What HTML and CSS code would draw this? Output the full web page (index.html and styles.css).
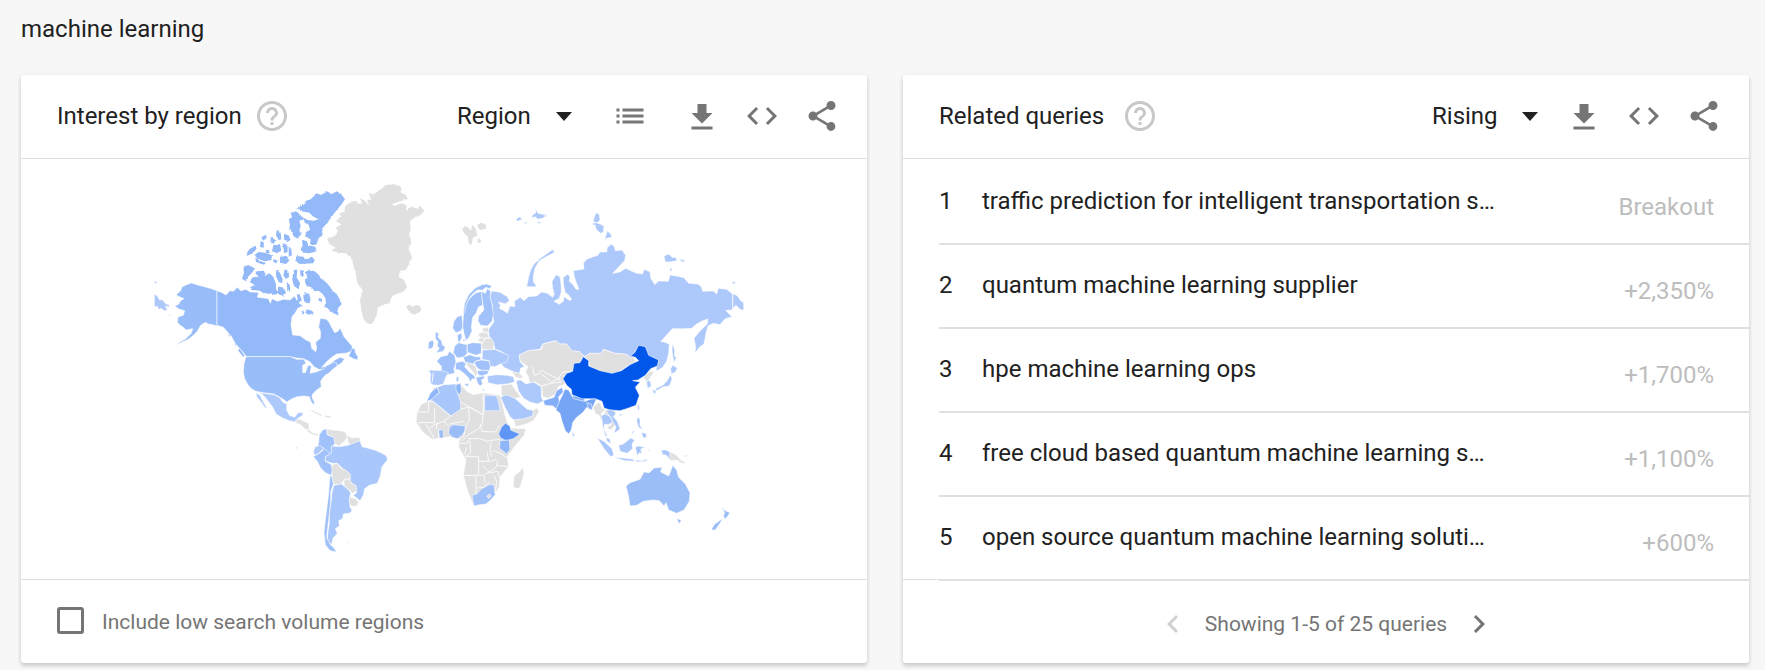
FILE: index.html
```
<!DOCTYPE html>
<html lang="en">
<head>
<meta charset="utf-8">
<title>machine learning</title>
<link rel="stylesheet" href="styles.css">
</head>
<body>
<svg class="sprite" aria-hidden="true">
  <symbol id="i-help" viewBox="0 0 24 24"><path d="M11 18h2v-2h-2v2zm1-16C6.480 2 2 6.480 2 12s4.480 10 10 10 10-4.480 10-10S17.520 2 12 2zm0 18c-4.410 0-8-3.590-8-8s3.590-8 8-8 8 3.590 8 8-3.590 8-8 8zm0-14c-2.210 0-4 1.790-4 4h2c0-1.100.9-2 2-2s2 .9 2 2c0 2-3 1.750-3 5h2c0-2.250 3-2.500 3-5 0-2.210-1.790-4-4-4z"/></symbol>
  <symbol id="i-list" viewBox="0 0 24 24"><path d="M3 9h2V7H3v2zm0 4h2v-2H3v2zm0 4h2v-2H3v2zm4 0h14v-2H7v2zm0-4h14v-2H7v2zm0-6v2h14V7H7z"/></symbol>
  <symbol id="i-download" viewBox="0 0 24 24"><path d="M19 10h-4V4H9v6H5l7 7 7-7zM5 19v2h14v-2H5z"/></symbol>
  <symbol id="i-code" viewBox="0 0 24 24"><path d="M9.400 16.600L4.800 12l4.600-4.600L8 6l-6 6 6 6 1.400-1.400zm5.200 0l4.600-4.600-4.600-4.600L16 6l6 6-6 6-1.400-1.400z"/></symbol>
  <symbol id="i-share" viewBox="0 0 24 24"><path d="M18 16.080c-.76 0-1.440.3-1.960.77L8.910 12.700c.05-.23.09-.46.09-.7s-.04-.47-.09-.7l7.050-4.110c.54.5 1.250.81 2.040.81 1.660 0 3-1.340 3-3s-1.340-3-3-3-3 1.340-3 3c0 .24.04.47.09.7L8.040 9.810C7.500 9.310 6.790 9 6 9c-1.660 0-3 1.340-3 3s1.340 3 3 3c.79 0 1.500-.31 2.040-.81l7.120 4.160c-.05.21-.08.43-.08.65 0 1.610 1.310 2.920 2.920 2.920s2.920-1.310 2.920-2.920-1.310-2.920-2.920-2.920z"/></symbol>
  <symbol id="i-prev" viewBox="0 0 24 24"><path d="M15.410 7.410L14 6l-6 6 6 6 1.410-1.410L10.830 12z"/></symbol>
  <symbol id="i-next" viewBox="0 0 24 24"><path d="M10 6L8.590 7.410 13.170 12l-4.580 4.590L10 18l6-6z"/></symbol>
</svg>

<h1 class="term">machine learning</h1>
<main class="cards">
  <section class="card">
    <header class="head">
      <h2 class="title">Interest by region</h2>
      <button class="icon help" aria-label="Help"><svg><use href="#i-help"/></svg></button>
      <div class="drop drop-region"><select aria-label="Resolution"><option>Region</option></select></div>
      <button class="icon list-btn" aria-label="Show as list"><svg><use href="#i-list"/></svg></button>
      <div class="actions">
        <button class="icon" aria-label="Download"><svg><use href="#i-download"/></svg></button>
        <button class="icon" aria-label="Embed"><svg><use href="#i-code"/></svg></button>
        <button class="icon" aria-label="Share"><svg><use href="#i-share"/></svg></button>
      </div>
    </header>
    <svg class="map" viewBox="21 159 846 420" role="img" aria-label="World map of interest by region">
      <defs>
        <filter id="coast" x="-5%" y="-5%" width="110%" height="110%">
          <feTurbulence type="fractalNoise" baseFrequency="0.22" numOctaves="2" seed="4" result="n"/>
          <feDisplacementMap in="SourceGraphic" in2="n" scale="7" xChannelSelector="R" yChannelSelector="G"/>
        </filter>
      </defs>

      <!-- Alaska and Canada -->
      <g transform="translate(140 170) scale(.33333)">
        <path class="us" d="M231 362L215 356 188 349 175 346 155 339 140 344 126 351 122 362 108 374 118 380 132 386 122 392 116 403 104 408 118 418 134 422 130 436 114 441 112 456 120 466 128 470 138 480 158 476 154 490 136 507 120 516 105 527 125 517 145 508 160 496 172 484 182 466 196 457 205 462 218 464 231 468Z"/>
        <path class="ru" d="M43 373L52 377 58 389 68 390 78 402 88 404 87 411 76 408 82 420 74 423 64 415 56 418 52 409 43 410ZM43 334l9 3-4 4-5-2ZM80 431l14 5-3 2Z"/>
        <path class="ca" d="M231 362L246 368 258 375 270 362 280 364 292 352 302 362 318 358 330 366 356 367 352 382 372 384 385 386 391 400 396 386 412 394 430 388 450 390 464 378 470 390 484 386 478 400 490 408 474 414 466 428 456 440 453 465 458 495 480 497 498 510 512 517 515 535 527 545 530 535 527 517 541 505 542 485 536 470 541 445 560 448 568 458 576 474 584 488 594 484 600 474 606 486 612 500 622 512 636 528 638 542 620 549 590 552 575 562 560 575 545 592 562 588 585 570 600 562 614 566 604 580 584 590 560 598 536 598 522 590 510 575 490 566 470 564 452 560 320 560 310 548 300 536 285 520 275 500 262 485 250 472 231 466Z"/>
        <path class="ca" d="M626 558l10-22 8-2 2 14 8 12-2 10-12-4ZM262 488l10 8-3 4ZM282 514l8 12-4 2ZM298 534l16 22-4 6-16-20Z"/>
        <g filter="url(#coast)">
          <path class="ca" d="M543 75L560 64 576 72 590 64 603 72 615 88 604 104 592 118 584 128 572 144 562 160 552 168 546 184 548 196 536 204 530 222 520 226 510 222 512 208 496 200 498 186 510 180 506 164 494 158 492 148 478 152 482 168 478 182 484 192 472 206 460 198 456 186 448 176 450 162 446 148 456 142 452 128 468 124 474 128 486 140 502 150 524 152 536 148 520 140 508 128 484 124 472 116 480 106 492 104 498 92 512 88 522 78 530 70Z"/>
          <path class="ca" d="M486 210l14 2 4 14 22 4 4 14-20 6-20-2-8-10 6-10ZM470 258l20 2 8 8 18-8 8 10-4 10-40 2-14-8ZM432 192l14 4 6 14-10 6-10-8ZM410 180l12 8 2 20-8 2-8-14ZM364 202l14-8 2 10-10 8ZM330 236l16-8 4 8-12 14-18 8 2-12ZM362 212l10 6-2 16-10-4ZM392 200l14 10-4 12-10-6ZM400 226l20-4 4 20-14 8-14-6ZM428 220l14 4 2 22-12 4ZM446 228l8 10 2 18-10 4ZM356 246l20 2 20 8-2 14-18 4-24-8-8-12ZM420 260l20-2 8 14-10 10-18-4ZM378 238l10 4-2 8-8-2ZM400 268l12 2-2 10-10-4ZM346 262l12 12 20 4-6 6-24-8Z"/>
          <path class="ca" d="M310 290L328 284 344 296 338 306 326 318 318 334 306 326 312 308ZM350 304l22-2 4 14 12-6 12 10 8 22 0 16 10 12-14 4-12-4-18 2-14-10-24-2-4-12 14-2-16-10 8-14 18-2-10-10ZM408 300l12 8 8 20-2 12-10-4-8-18ZM434 298l10 4 4 18-10 8-8-12ZM414 350l14 2 10 14-8 12-16-6ZM440 336l10 10 0 20-8-6ZM462 300l10-2-2 24 10 18-4 18-14-10-6-22ZM480 300l12 2-2 18-8-2Z"/>
          <path class="ca" d="M496 306L508 300 524 304 536 314 544 326 558 336 570 350 578 362 590 372 600 390 606 402 596 412 592 424 596 436 584 432 570 422 562 414 552 410 558 400 556 384 548 372 536 362 524 364 514 352 500 348 494 334 502 322ZM494 366l14 6 4 18-8 12-12-8-2-16ZM500 418l16 4 6 8-16 4-10-6ZM536 384l10 2 0 10-10-4ZM470 372l10 4 6 16-12 2ZM488 420l6 10-8 4Z"/>
        </g>
      </g>

      <!-- Greenland, Iceland, Svalbard -->
      <g transform="translate(300 170) scale(.33333)">
        <g filter="url(#coast)">
          <path class="no" d="M136 108L152 96 168 92 176 102 188 100 178 84 192 90 208 108 200 88 214 90 206 68 220 74 240 60 256 46 276 42 296 46 306 54 300 66 318 76 324 88 300 94 276 102 282 108 306 100 320 106 318 122 336 110 352 116 360 108 374 120 364 134 344 142 330 154 332 178 328 190 334 220 326 236 336 262 326 284 318 300 300 302 296 320 312 330 322 352 308 366 290 372 276 378 268 400 250 404 234 412 230 436 222 452 216 462 200 460 190 446 184 420 180 390 188 360 172 340 168 312 160 286 152 262 136 250 112 248 92 240 108 234 88 222 82 206 104 198 114 186 108 172 124 164 108 152 124 140 118 130 132 126Z"/>
          <path class="no" d="M318 410l12-6 8 6 8-6 14 4 4 12-8 8-14 6-14-8ZM486 176l14-8 12 14 6-18 10 14 4 20-14 6-4 24-8-8-2-20-12-10ZM530 166l14-8 14 6 0 12-18 4ZM536 204l8 8-6 10-6-8Z"/>
        </g>
      </g>

      <!-- Russia, Mongolia, Japan -->
      <g transform="translate(540 180) scale(.33333)">
        <path class="ru" d="M-145 333L-120 337-98 350-92 362-104 371-125 366-118 376-122 385-108 392-98 400-90 378-75 380-77 364-60 352-48 362-35 350-10 348 5 336 22 340 38 352 43 342 38 325 36 305 48 284 60 290 63 312 64 335 58 355 42 364 58 373 70 364 72 350 90 362 95 358 86 345 76 338 70 312 70 292 84 282 90 292 88 304 100 315 108 328 117 328 108 305 103 290 100 272 132 267 130 250 140 238 160 230 174 226 180 216 200 216 202 202 215 192 224 202 226 212 246 210 257 226 254 242 235 262 218 280 240 276 257 265 268 270 290 280 308 282 312 268 330 275 332 295 345 314 355 303 385 304 390 285 410 288 432 293 446 310 474 312 484 320 488 334 520 333 530 342 535 325 560 328 575 340 592 347 602 362 611 368 611 391 600 388 588 376 580 384 576 390 557 391 576 410 556 416 540 434 520 430 504 438 498 460 492 492 478 502 465 520 467 500 462 475 478 455 502 432 504 417 486 423 470 432 455 445 430 446 397 446 380 465 362 485 372 486 388 492 386 520 380 544 368 562 352 572 348 568 356 542 338 540 322 525 315 505 295 500 285 515 290 530 272 535 260 523 225 520 190 508 185 520 150 520 133 530 115 515 95 513 80 492 55 492 45 482 8 492 0 508-35 512-62 525-60 545-46 560-58 564-62 582-86 572-108 562-120 548-105 540-97 528-115 515-135 507-140 488-152 470-155 450-146 436-138 425-144 400-142 380-150 350Z"/>
        <path class="bd" d="M578 338V388"/>
        <path class="ru" d="M-40 320l6-30 6-20 10-18 20-18 34-24 6 0 0 8-24 12-20 12-14 24-4 24 0 14 10 16-12 0Z"/>
        <path class="ru" d="M160 120l8-22 10 6 2 16-8 8-10-2ZM152 132l14-4 14 4 12 6-2 18-8 4-14-12-2-12ZM194 180l8-28 10 10 4 10-14 2ZM372 228l14-6 10 10 14 2 0 8-20 4-14 0ZM418 236l12 4 8 4-12 2ZM390 262l8 8-8 4ZM576 304l14 4-12 4ZM-72 118l12-8 6 8-14 6ZM-50 128l14-2-8 6ZM-22 104l10-6-2-14 8 16 20 4 10-4-14 14-16 4-8-8-12 4ZM-10 124l12 2-4 6ZM12 106l10 0-6 6ZM398 490l6 20 0 20 6 0-8 18-4-20-2-20ZM392 566l6-10 14 8-6 12-12 6ZM392 584l4 14-8 20-18 2-20 12-4-6 22-10 12-12ZM338 628l10 4-2 10-6-2Z"/>
        <path class="no" d="M133 530L150 520 185 520 190 508 225 520 260 523 272 533 280 530 288 548 262 558 246 570 218 582 172 574 148 560 146 544Z"/>
        <path class="kr" d="M320 600l10 2 4 16-10 8-4-10Z"/>
        <path class="no" d="M310 590l20-16 12 2-12 18-6 10-10-4Z"/>
      </g>

      <!-- Europe and Central Asia -->
      <g transform="translate(400 180) scale(.33333)">
        <path class="no" d="M357 525L385 512 425 508 428 492 470 482 480 492 500 492 516 512 540 515 554 532 546 548 525 552 520 570 500 580 490 595 500 605 490 615 475 620 470 640 445 655 428 650 425 618 404 605 390 610 385 590 376 575 384 560 362 545Z"/>
        <path class="bd" d="M398 560l4 26 14-4 8-12 20 12 30 14 14-20 34-2M424 582l30 24 16-8 12-4M425 618l28-8 30-4M474 596l10 12"/>
        <path class="eu" d="M190 410L192 390 198 372 210 354 226 340 244 334 246 350 248 376 236 380 228 400 218 412 214 440 216 452 208 470 198 482 192 460 188 440Z"/>
        <path class="no1" d="M162 424L172 410 186 406 188 440 184 452 168 458 158 444ZM190 400l4-30 12-26 20-20 20-10 14-2 16 6-8 8-10-4-10 8-16 0-20 18-12 22-6 26Z"/>
        <path class="eu" d="M244 334L256 340 262 326 272 334 270 352 276 372 280 402 276 424 262 438 242 436 234 422 236 408 252 390 248 370Z"/>
        <path class="no" d="M248 444l18-2-2 16-16-4ZM236 462l12-6 16 4 2 12-18 4-12-8ZM236 476l12-6 8 10-10 8-12-6ZM254 476l20-2 8 16-2 20-34-2 0-16Z"/>
        <path class="eu" d="M202 492l16-4 26 2 0 30-16 6-28-10ZM164 498l12-10 14 4 12 2 0 26-10 10-20 4-12-16ZM172 466l12-8 2 14-8 16-4-6ZM188 478l8 0-4 8Z"/>
        <path class="eu" d="M122 530l20-4 6-12 16 12 4 20-6 20 2 14-20 4-20-8 0-18-14-14Z"/>
        <path class="eu" d="M106 456l10 4-2 12 10 10 4 14 8 4-6 14-22 4 10-12-6-8 2-14-8-8ZM86 486l12-6 4 10-4 14-14 4Z"/>
        <path class="ru" d="M86 570l40 2 20 6-8 12-8 22-16 4-18-2-6-8 2-24Z"/><path class="bd" d="M100 578l-4 30"/>
        <path class="eu" d="M168 548l20-4 10 6-4 10 14 16 16 12 2 10-8-2-8 10-4-12-16-16-12-8-12-2ZM192 612l14-2-2 10ZM170 590l6 0 0 14-8 0Z"/>
        <path class="eu" d="M190 532l20-8 16 6 14 0 4 8-18 6-6 8-24-4ZM222 546l20-6 24 2 6 14-4 16-20 0-14-6-6-8ZM232 572l30-2 4 10-20 8-12-4Z"/>
        <path class="no" d="M196 546l22 6 10 8 4 20-6 10-6-14-16-16Z"/>
        <path class="ru" d="M248 510L284 508 302 516 326 526 320 546 300 552 286 560 270 558 268 542 246 538Z"/>
        <path class="eu" d="M228 592l24-4 2 6-10 6 4 12-8 6-8-10ZM244 628l12 0-6 4Z"/>
        <path class="ru" d="M262 588L290 584 320 586 340 590 344 606 320 612 290 614 264 608Z"/>
        <path class="no" d="M334 574l24 6 10 8-4 8-16-4ZM304 616l30-4 14 20 14 18-20 8-20-6-16 8-2-24Z"/>
        <path class="ru" d="M348 602L362 600 378 612 400 606 424 620 424 650 430 664 412 672 390 666 372 656 356 634Z"/>
      </g>

      <!-- United States, Latin America -->
      <g transform="translate(230 340) scale(.33333)">
        <path class="us" d="M50 50L182 50 200 58 222 58 228 70 218 76 218 98 226 98 234 76 244 78 242 90 240 100 258 96 278 88 292 76 306 70 318 66 322 78 308 88 298 98 286 106 278 114 272 124 274 140 260 150 248 162 246 172 254 188 250 194 242 182 238 170 222 168 202 170 186 176 170 186 160 178 150 172 132 162 100 158 78 154 64 146 54 134 44 116 40 96 42 72 46 56Z"/>
        <path class="mx" d="M80 156L100 160 132 164 150 174 158 186 170 192 170 210 178 226 194 232 204 218 220 218 216 228 204 234 196 246 178 242 158 234 138 222 130 204 112 180 96 162ZM78 158l12 8 8 16 14 24-6-2-16-22-10-12Z"/>
        <path class="no" d="M196 240l10-4 16 8 14 6 2 20-14-4-12-12-12-4ZM224 268l14 2 10 8 18 4-4 6-18-6ZM232 210l20 2 26 14-6 2-22-12ZM284 226l20 2-4 6-14-2Z"/>
        <path class="co" d="M268 284L278 270 290 266 292 284 314 292 316 310 306 320 304 344 290 336 262 320 266 308Z"/>
        <path class="no" d="M290 266L304 270 330 272 346 276 352 290 344 304 326 318 314 308 312 292 292 284ZM352 286l14 8 14-2 12 4-4 12-28 8-8-14Z"/>
        <path class="mx" d="M254 322l14-6 14 8-14 14-12 8-6-8Z"/>
        <path class="co" d="M250 350L268 340 284 326 302 342 286 350 286 364 302 372 308 388 304 406 286 398 272 384 262 364Z"/>
        <path class="br" d="M304 318L328 320 354 316 390 302 396 320 412 324 434 330 456 340 470 348 472 360 456 380 450 410 442 430 418 436 404 446 400 466 390 482 370 466 380 458 376 440 360 424 358 400 336 384 322 370 306 370 286 362 286 350 304 340Z"/>
        <path class="no" d="M306 374l16-4 10 14 18 8 12 12-2 14-18 2-8 12-22 2-6-16ZM342 418l18-2 4 14 14 6 2 16-12 8-14-14-12-8ZM360 472l16 4 10 10-6 12-14 2-8-10Z"/>
        <path class="ar" d="M312 436L334 432 354 448 362 458 358 480 360 500 366 512 358 520 340 522 338 536 326 542 328 558 316 566 322 580 308 596 306 612 296 608 292 590 298 550 298 520 304 480 306 456Z"/>
        <path class="ch" d="M300 406L306 412 310 432 302 456 302 486 298 520 294 556 290 592 300 612 312 624 320 636 300 632 286 614 282 580 286 540 290 510 296 460Z"/>
        <path class="no" d="M350 610l10 0-4 4Z"/><path class="ch" d="M198 321h3v5h-3Z"/>
      </g>

      <!-- Africa, South Asia, Oceania -->
      <g transform="translate(400 360) scale(.33333)">
        <path class="no" d="M84 124L100 84 180 70 200 94 220 104 250 98 300 106 310 144 318 176 330 204 378 206 372 226 342 262 322 290 326 320 300 350 298 380 286 400 262 430 220 436 204 396 190 346 198 300 176 262 178 236 150 230 96 238 68 216 48 186 52 156 64 132Z"/>
        <path class="mo" d="M80 124L92 98 110 82 118 96 100 118Z"/>
        <path class="br" d="M92 120L118 98 112 82 132 74 168 72 174 104 182 126 182 148 152 168 124 146Z"/>
        <path class="mo" d="M168 74l14-4 2 26-8 8-8-14Z"/>
        <path class="bd" d="M182 126l68 38V98M52 156h34V124h14l52 44M104 144v44h-50M152 168l-20 16-24 8-22 14-8-12M182 148l24-8 42 24v24l-12 18M206 140l2 40-12 20M250 152v12M190 184l-42 8M240 190l6 24 40 2 14-20M132 184l14 14M86 206l16 28M110 190v18M116 208v28M196 200l-4 28-14 12M236 206l-34 20-16 18M204 236h34l30 10M178 250h22l6-10M200 262l-6 22M210 242l2 36-14 12M274 246l-4 24 6 20M196 290h40v14h30l-4-26M236 304v40M190 346h58l20-10M266 306l24-8M228 348v54M232 384l18-2 20-16M268 336l20-14 6-20M256 368l-4-20M248 318l22 20 24-4 4 18M278 272l24 8 20 14M288 316l38 4M282 348l8 16-4 36M300 238l-34 4"/>
        <path class="ng" d="M148 202L160 194 196 198 194 214 186 226 172 236 158 232 146 220ZM116 210h14v24h-12Z"/>
        <path class="br" d="M254 106l20 0 16 2 6 20 4 24-46 0Z"/>
        <path class="et" d="M296 222L304 202 316 190 330 198 332 210 340 214 360 222 340 236 318 242 302 234Z"/>
        <path class="ke" d="M300 242l28-2 2 28-10 14-22-18 2-12Z"/>
        <path class="za" d="M216 406L230 402 246 386 268 374 282 374 284 394 286 404 272 420 258 432 238 434 222 438Z"/><path class="no" d="M260 408l8-6 6 6-8 8Z"/>
        <path class="no" d="M368 322l4 16-10 40-8 8-14-4 2-34 18-14Z"/>
        <path class="ar" d="M302 112L320 104 346 116 368 136 382 148 402 152 398 170 372 178 342 180 330 170 316 144Z"/>
        <path class="no" d="M342 180L372 176 398 168 400 150 410 144 418 154 400 182 372 194 346 200Z"/>
        <path class="pk" d="M430 122L462 112 470 92 486 82 490 96 476 110 478 124 474 152 460 138 434 136Z"/>
        <path class="ind" d="M478 124L488 104 494 88 506 90 518 112 556 124 570 118 590 116 584 128 574 150 560 142 550 156 528 174 518 188 514 210 506 222 496 212 486 184 480 160 468 150Z"/>
        <path class="pk" d="M516 106l38 10 0 8-34-8ZM560 128l14 4 4 18-12-4Z"/>
        <path class="co" d="M516 214l8 12-6 4ZM590 14Z"/>
        <path class="cn" d="M489 56L500 40 518 34 522 10 540 8 550-10 566 2 566 18 600 32 636 40 664 32 690 14 716 2 706-8 692-12 704-22 716-44 736-40 746-14 776 0 772 18 752 26 736 46 714 60 698 62 720 66 706 82 718 106 708 136 680 146 660 152 630 150 612 144 606 124 586 116 546 116 516 104 514 88 500 76Z"/>
        <path class="no" d="M598 126l8 16 10 8-12 10 6 30-6-10-8-16-10-2-6-22ZM612 152l14 2 14 18 6 24-14 14-12-8 14-8-14-16Z"/>
        <path class="br" d="M604 168l10-6 20 8 4 16-14 8-10-2-2 16 10 20-6 0-6-22ZM618 150l20 0 10 10-8 10 12 14 8 22-8 8-10 6 6-20-12-18Z"/>
        <path class="br" d="M656 166l8-6 0 8ZM712 136l4-4 2 16-4 4ZM592 234l20 10 24 22 6 20-10 4-20-24ZM618 232l12 6 2 14-12-10ZM640 292l30 2 28 4 8 6-30-2ZM708 300l20 2 14-6-4 8-28 2ZM656 256l14-4 22-18 12 6-8 12 2 14-16 14-22-6ZM706 262l10-4 18 4-12 6 4 14-8-4-6 10ZM712 172l8 4 0 20 8 14-12-8-6-18ZM724 218l14 2 2 12-10 2ZM704 212l-10 16 4-14ZM784 270l14 0 12 6 0 24-10-14-12-2ZM744 262l6 14-4-2Z"/>
        <path class="no" d="M810 276l18 8 12 14 20 12-14 0-16-10-20 2ZM848 286l14 0-4 6ZM880 290l10 6-8-4ZM932 330l8 6-4-2ZM990 346l8-4-4 4Z"/>
        <path class="au" d="M678 378L690 368 720 358 732 336 748 338 762 324 786 322 782 336 806 348 812 334 818 316 830 330 836 352 856 372 870 398 868 424 852 450 830 460 806 450 798 428 792 438 778 422 760 420 730 424 710 436 690 438 686 410ZM830 476l14 4-6 12ZM966 440l10 12 14 6-14 20-6-10 4-10ZM968 476l-8 14-14 20-12 0 8-16 14-10Z"/>
        <path class="ru" d="M740 66l8-6 6 16-10 8Z"/>
      </g>
    </svg>
    <footer class="foot">
      <input class="check" type="checkbox" id="low"><label for="low">Include low search volume regions</label>
    </footer>
  </section>

  <section class="card">
    <header class="head">
      <h2 class="title title-wide">Related queries</h2>
      <button class="icon help" aria-label="Help"><svg><use href="#i-help"/></svg></button>
      <div class="drop drop-rising"><select aria-label="Sort"><option>Rising</option></select></div>
      <div class="actions">
        <button class="icon" aria-label="Download"><svg><use href="#i-download"/></svg></button>
        <button class="icon" aria-label="Embed"><svg><use href="#i-code"/></svg></button>
        <button class="icon" aria-label="Share"><svg><use href="#i-share"/></svg></button>
      </div>
    </header>
    <ol class="rows">
      <li><span class="rank">1</span><a href="#">traffic prediction for intelligent transportation s…</a><span class="val">Breakout</span></li>
      <li><span class="rank">2</span><a href="#">quantum machine learning supplier</a><span class="val">+2,350%</span></li>
      <li><span class="rank">3</span><a href="#">hpe machine learning ops</a><span class="val">+1,700%</span></li>
      <li><span class="rank">4</span><a href="#">free cloud based quantum machine learning s…</a><span class="val">+1,100%</span></li>
      <li><span class="rank">5</span><a href="#">open source quantum machine learning soluti…</a><span class="val">+600%</span></li>
    </ol>
    <footer class="foot pager">
      <button class="icon" aria-label="Previous" disabled><svg><use href="#i-prev"/></svg></button>
      <span>Showing 1-5 of 25 queries</span>
      <button class="icon" aria-label="Next"><svg><use href="#i-next"/></svg></button>
    </footer>
  </section>
</main>
</body>
</html>
```

FILE: styles.css
```
* { box-sizing: border-box; }
body {
  margin: 0;
  padding: 0 16px 7px 21px;
  background: #f7f7f7;
  color: #212121;
  font-family: Roboto, "Liberation Sans", sans-serif;
  font-size: 24px;
}
button, select { font: inherit; color: inherit; background: none; border: 0; padding: 0; }
.sprite { position: absolute; width: 0; height: 0; }
.term { margin: 0; padding: 13px 0 30px; font-size: 24px; font-weight: 400; line-height: 32px; }
.cards { display: grid; grid-template-columns: 1fr 1fr; gap: 36px; }
.card {
  display: flex;
  flex-direction: column;
  background: #fff;
  border-radius: 3px;
  box-shadow: 0 3px 4px rgba(0, 0, 0, .14), 0 1px 5px rgba(0, 0, 0, .08);
}
.head {
  display: flex;
  align-items: center;
  height: 84px;
  padding: 0 27px 2px 36px;
  border-bottom: 1px solid #e0e0e0;
}
.title { margin: 0 12px 0 0; font-size: 24px; font-weight: 400; line-height: 32px; }
.title-wide { margin-right: 18px; }
.icon { display: block; width: 36px; height: 36px; color: #757575; }
.icon svg { display: block; width: 36px; height: 36px; fill: currentColor; }
.help { color: #c8c8c8; }
.drop { position: relative; margin-left: auto; }
.drop select { appearance: none; width: 100%; height: 36px; }
.drop::after {
  content: "";
  position: absolute;
  right: 0;
  top: 14px;
  border: 8px solid transparent;
  border-top: 9px solid #212121;
  border-bottom: 0;
  pointer-events: none;
}
.drop-region { width: 115px; margin-right: 40px; }
.drop-rising { width: 106px; margin-right: 28px; }
.list-btn { margin-right: 36px; }
.actions { display: flex; gap: 24px; }

.map { display: block; width: 100%; flex: 1; }
.map path { stroke: #fff; stroke-width: 2; stroke-linejoin: round; stroke-opacity: .8; }
.map g g path { stroke: none; }
.map .bd { fill: none; stroke: #fafafa; stroke-width: 3; stroke-opacity: 1; }
.no { fill: #e0e0e0; }
.us { fill: #99bdf8; }
.ca { fill: #94b9f8; }
.ru, .mx { fill: #adc8fa; }
.br, .ar { fill: #a9c7fa; }
.eu, .no1, .co, .ch, .za { fill: #a0c1f9; }
.au { fill: #9cbef8; }
.ng { fill: #9abdf8; }
.ke, .mo, .kr { fill: #8fb6f8; }
.pk { fill: #84aef7; }
.ind { fill: #76a5f6; }
.et { fill: #5f96f5; }
.cn { fill: #0057ea; }

.foot {
  display: flex;
  align-items: center;
  height: 84px;
  padding: 0 36px;
  border-top: 1px solid #e0e0e0;
  color: #757575;
  font-size: 21px;
}
.check {
  appearance: none;
  width: 27px;
  height: 27px;
  margin: 0 18px 2px 0;
  border: 3px solid #757575;
  border-radius: 3px;
}
.pager { justify-content: center; gap: 14px; margin-top: -2px; padding-top: 4px; }
.pager .icon:disabled { color: #d0d0d0; }

.rows { list-style: none; margin: 0; padding: 2px 0 0 36px; }
.rows li {
  display: flex;
  height: 84px;
  padding-right: 35px;
  border-bottom: 2px solid #e0e0e0;
  line-height: 32px;
}
.rank { width: 43px; padding-top: 24px; }
.rows a { flex: 1; padding-top: 24px; color: inherit; text-decoration: none; }
.val { padding-top: 30px; color: #bdbdbd; }
```
